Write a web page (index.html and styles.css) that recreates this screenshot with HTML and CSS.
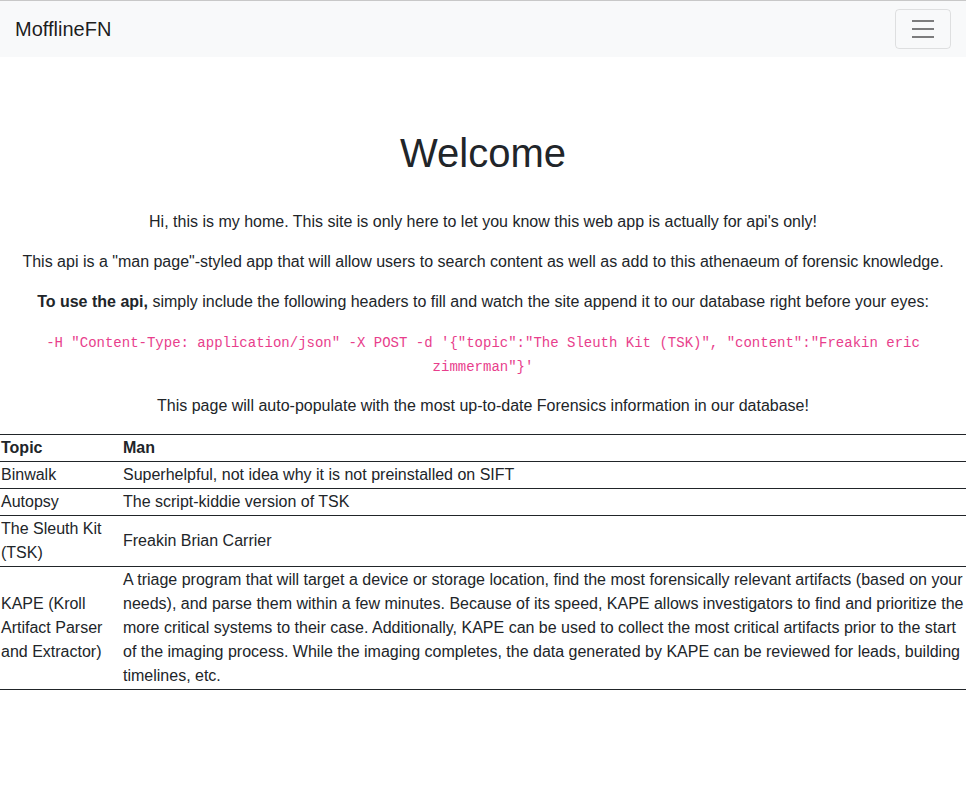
FILE: index.html
```html
<!DOCTYPE html>
<html lang="en">
<head>
<meta charset="utf-8">
<title>MofflineFN</title>
<link rel="stylesheet" href="styles.css">
</head>
<body>
<nav class="navbar">
  <a class="brand" href="#">MofflineFN</a>
  <button class="toggler" type="button" aria-label="Toggle navigation">
    <svg width="30" height="30" viewBox="0 0 30 30"><path stroke="rgba(0,0,0,0.5)" stroke-width="2" stroke-linecap="butt" d="M4 7h22M4 15h22M4 23h22"/></svg>
  </button>
</nav>
<main class="content">
  <h1 class="title">Welcome</h1>
  <p>Hi, this is my home. This site is only here to let you know this web app is actually for api's only!</p>
  <p>This api is a "man page"-styled app that will allow users to search content as well as add to this athenaeum of forensic knowledge.</p>
  <p><strong>To use the api,</strong> simply include the following headers to fill and watch the site append it to our database right before your eyes:</p>
  <p class="code-line"><code>-H "Content-Type: application/json" -X POST -d '{"topic":"The Sleuth Kit (TSK)", "content":"Freakin eric zimmerman"}'</code></p>
  <p>This page will auto-populate with the most up-to-date Forensics information in our database!</p>
  <table class="man-table">
    <thead>
      <tr><th class="col-topic">Topic</th><th>Man</th></tr>
    </thead>
    <tbody>
      <tr><td>Binwalk</td><td>Superhelpful, not idea why it is not preinstalled on SIFT</td></tr>
      <tr><td>Autopsy</td><td>The script-kiddie version of TSK</td></tr>
      <tr><td>The Sleuth Kit (TSK)</td><td>Freakin Brian Carrier</td></tr>
      <tr><td>KAPE (Kroll Artifact Parser and Extractor)</td><td>A triage program that will target a device or storage location, find the most forensically relevant artifacts (based on your needs), and parse them within a few minutes. Because of its speed, KAPE allows investigators to find and prioritize the more critical systems to their case. Additionally, KAPE can be used to collect the most critical artifacts prior to the start of the imaging process. While the imaging completes, the data generated by KAPE can be reviewed for leads, building timelines, etc.</td></tr>
    </tbody>
  </table>
</main>
</body>
</html>
```
FILE: styles.css
```css
* { box-sizing: border-box; }
html, body { margin: 0; padding: 0; }
body {
  font-family: "Liberation Sans", Arial, sans-serif;
  font-size: 16px;
  line-height: 1.5;
  color: #212529;
  background: #fff;
  border-top: 1px solid #c8c8c8;
}
.navbar {
  display: flex;
  align-items: center;
  justify-content: space-between;
  padding: 8px 15px 8px 15px;
  background: #f8f9fa;
  height: 56px;
}
.brand {
  font-size: 20px;
  line-height: 30px;
  color: rgba(0,0,0,0.9);
  text-decoration: none;
  padding: 5px 0;
}
.toggler {
  width: 56px;
  height: 40px;
  padding: 4px 12px;
  background: transparent;
  border: 1px solid rgba(0,0,0,0.1);
  border-radius: 4px;
  display: flex;
  align-items: center;
  justify-content: center;
}
.toggler svg { display: block; }
.content { text-align: center; }
.title {
  font-size: 40px;
  font-weight: 500;
  line-height: 1.2;
  margin: 72px 0 33px;
}
p { margin: 0 0 16px; }
.code-line { padding: 0 30px; }
code {
  font-family: "Liberation Mono", "Courier New", monospace;
  font-size: 14px;
  color: #e83e8c;
}
.man-table {
  width: 100%;
  border-collapse: collapse;
  text-align: left;
}
.man-table th, .man-table td {
  padding: 1px 1px;
  vertical-align: middle;
  border-top: 1px solid #212529;
  border-bottom: 1px solid #212529;
}
.man-table th { font-weight: 700; }
.col-topic { width: 122px; }
```
